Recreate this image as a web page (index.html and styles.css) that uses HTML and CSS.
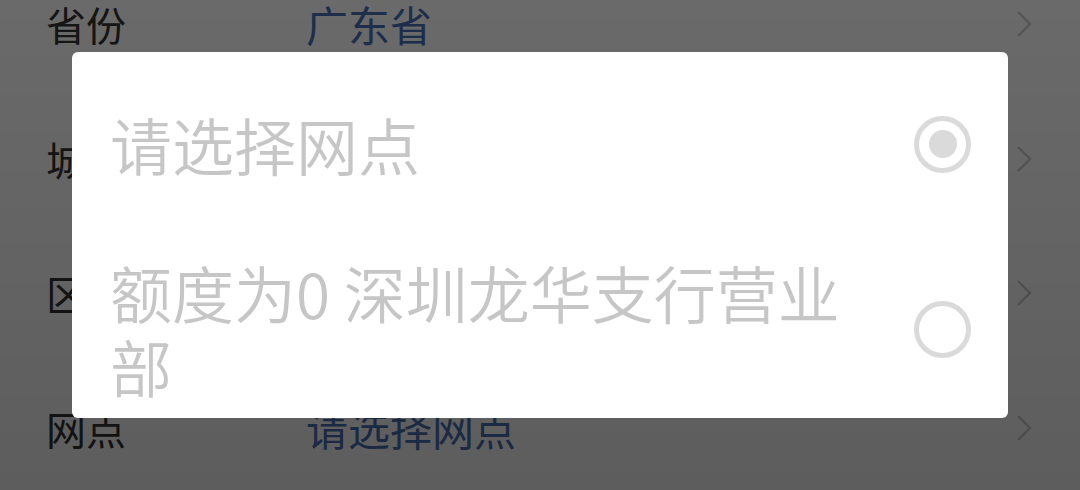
FILE: index.html
```html
<!DOCTYPE html>
<html lang="zh-CN">
<head>
<meta charset="utf-8">
<title>选择网点</title>
<link rel="stylesheet" href="styles.css">
</head>
<body>
<div class="page">
  <ul class="form-list">
    <li class="form-row">
      <span class="label">省份</span>
      <span class="value">广东省</span>
      <svg class="chevron" viewBox="0 0 16 28" width="16" height="28"><path d="M2 2 L14 14 L2 26" fill="none" stroke="currentColor" stroke-width="2.4"/></svg>
    </li>
    <li class="form-row">
      <span class="label">城市</span>
      <span class="value">深圳市</span>
      <svg class="chevron" viewBox="0 0 16 28" width="16" height="28"><path d="M2 2 L14 14 L2 26" fill="none" stroke="currentColor" stroke-width="2.4"/></svg>
    </li>
    <li class="form-row">
      <span class="label">区县</span>
      <span class="value">龙华区</span>
      <svg class="chevron" viewBox="0 0 16 28" width="16" height="28"><path d="M2 2 L14 14 L2 26" fill="none" stroke="currentColor" stroke-width="2.4"/></svg>
    </li>
    <li class="form-row">
      <span class="label">网点</span>
      <span class="value">请选择网点</span>
      <svg class="chevron" viewBox="0 0 16 28" width="16" height="28"><path d="M2 2 L14 14 L2 26" fill="none" stroke="currentColor" stroke-width="2.4"/></svg>
    </li>
  </ul>
</div>
<div class="mask">
  <div class="dialog">
    <div class="option">
      <span class="option-text">请选择网点</span>
      <span class="radio checked"></span>
    </div>
    <div class="option">
      <span class="option-text">额度为0 深圳龙华支行营业部</span>
      <span class="radio"></span>
    </div>
  </div>
</div>
</body>
</html>
```
FILE: styles.css
```css
html, body {
  margin: 0;
  padding: 0;
  height: 100%;
  overflow: hidden;
  background: #ffffff;
  font-family: "Noto Sans CJK SC", "Noto Sans", sans-serif;
}

.page {
  width: 1080px;
  height: 490px;
  overflow: hidden;
}

.form-list {
  list-style: none;
  margin: -43px 0 0 0;
  padding: 0;
}

.form-row {
  display: flex;
  align-items: center;
  height: 134.5px;
  padding: 0 48px 0 46px;
  box-sizing: border-box;
}

.label {
  width: 260px;
  font-size: 40px;
  color: #333333;
  line-height: 1;
}

.value {
  flex: 1;
  font-size: 42px;
  color: #4a70b4;
  line-height: 1;
}

.chevron {
  color: #cccccc;
  flex: none;
}

.mask {
  position: fixed;
  inset: 0;
  background: linear-gradient(to bottom, rgba(0,0,0,0.585), rgba(0,0,0,0.635));
  display: flex;
  justify-content: center;
  align-items: flex-start;
  padding-top: 52px;
  box-sizing: border-box;
}

.dialog {
  width: 936px;
  height: 366px;
  background: #ffffff;
  border-radius: 6px;
  overflow: hidden;
  padding: 18px 37px 0 38px;
  box-sizing: border-box;
}

.option {
  display: flex;
  align-items: center;
  gap: 60px;
  padding: 37px 0;
}

.option-text {
  flex: 1;
  font-size: 62px;
  font-weight: 350;
  line-height: 74px;
  color: #c6c6c6;
}

.radio {
  flex: none;
  width: 57px;
  height: 57px;
  border: 5px solid #dadada;
  border-radius: 50%;
  box-sizing: border-box;
  display: flex;
  align-items: center;
  justify-content: center;
}

.radio.checked::after {
  content: "";
  width: 28px;
  height: 28px;
  border-radius: 50%;
  background: #dadada;
}
```
